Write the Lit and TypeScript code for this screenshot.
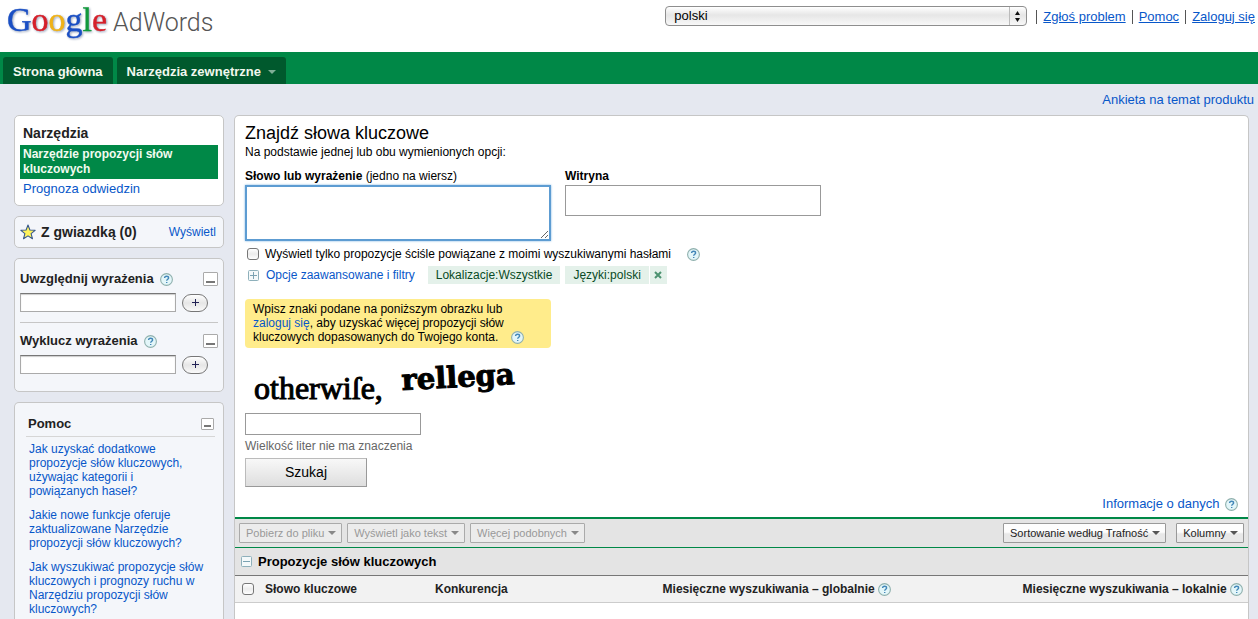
import { LitElement, html, css, svg } from "lit";
import { customElement, property } from "lit/decorators.js";

@customElement("help-icon")
class HelpIcon extends LitElement {
  static styles = css`
    :host { display: inline-flex; width: 13px; height: 13px; vertical-align: -3px; }
    svg { display: block; width: 13px; height: 13px; }
  `;
  render() {
    return html`<svg viewBox="0 0 13 13" role="img" aria-label="Pomoc">
      <circle cx="6.5" cy="6.5" r="5.9" fill="#e3f6f9" stroke="#8fb0ad" stroke-width="1.1" />
      <path d="M4.6 5.1C4.6 3.9 5.4 3.2 6.6 3.2C7.8 3.2 8.6 3.9 8.6 4.9C8.6 6.2 6.7 6.3 6.7 7.8M6.7 8.9V10.1"
        fill="none" stroke="#4387b8" stroke-width="1.4" />
    </svg>`;
  }
}

@customElement("box-toggle")
class BoxToggle extends LitElement {
  @property() kind = "minus";
  @property() label = "";
  static styles = css`
    :host { display: inline-flex; }
    .box { display: flex; padding: 0; border: 0; background: none; }
    svg { display: block; width: 11px; height: 11px; }
  `;
  render() {
    return html`<button class="box" aria-label=${this.label}>
      <svg viewBox="0 0 11 11">
        <rect x=".5" y=".5" width="10" height="10" rx="1" fill="#f4f9fa" stroke="#8eb0bb" />
        <path d=${this.kind === "plus" ? "M2 5.5H9M5.5 2V9" : "M2 5.5H9"} stroke="#7ba2b2" fill="none" />
      </svg>
    </button>`;
  }
}

const caret = svg`<path d="M0 0H8L4 4Z" fill="currentColor" />`;

@customElement("app-root")
class AppRoot extends LitElement {
  static styles = css`
    :host {
      display: flex; flex-direction: column; min-height: 100vh;
      background: #e5e8f0; color: #000;
      font-family: "Liberation Sans", Arial, Helvetica, sans-serif;
      font-size: 12px; line-height: 14px;
    }
    * { box-sizing: border-box; }
    a { color: #0857c9; text-decoration: none; }
    button, input, select, textarea { font-family: inherit; margin: 0; }
    h1, h2, p, ul { margin: 0; padding: 0; }

    .top { display: flex; justify-content: space-between; align-items: flex-start; height: 52px; background: #fff; padding: 0 3px 0 7px; }
    .logo { display: flex; align-items: baseline; height: 44px; line-height: 40px; }
    .google { font-family: "Liberation Serif", serif; font-size: 34px; filter: drop-shadow(1px 1px 1px #99a5bb); -webkit-text-stroke: 0.4px; }
    .blue { color: #1a4fc4; } .red { color: #d6202a; } .yellow { color: #f0b217; } .green { color: #129a3c; }
    .adwords { font-family: Roboto, sans-serif; font-weight: 300; font-size: 25px; color: #555; margin-left: 6px; }
    .account { display: flex; align-items: center; padding-top: 6px; font-size: 13px; line-height: 20px; }
    .account a { text-decoration: underline; padding: 0 6px; border-left: 1px solid #555; line-height: 14px; margin-top: 1px; }
    .account a:last-child { padding-right: 0; }
    .lang { display: grid; width: 362px; margin-right: 9px; }
    .lang select, .lang svg { grid-area: 1 / 1; }
    .lang select {
      appearance: none; height: 20px; border: 1px solid #8e8e8e; border-radius: 4px; padding: 0 20px 1px 8px;
      background: linear-gradient(#fff, #e6e6e6 45%, #f8f8f8); font-size: 13px; color: #000;
    }
    .lang svg { justify-self: end; width: 18px; height: 20px; pointer-events: none; }

    .nav { display: flex; gap: 4px; align-items: flex-end; height: 32px; padding: 0 3px; background: #008847; }
    .tab {
      display: flex; align-items: center; gap: 7px; height: 27px; padding: 2px 10px 0;
      background: #00592d; color: #f2f8ee; font-size: 13px; font-weight: bold; border-radius: 3px 3px 0 0;
    }
    .tab svg { width: 8px; height: 4px; color: #7fae96; }
    .survey { padding: 8px 4px 8px; text-align: right; font-size: 13px; line-height: 15px; }

    .body { flex: 1; display: grid; grid-template-columns: 210px minmax(0, 1fr); gap: 10px; padding: 0 9px 0 14px; }
    .side { display: flex; flex-direction: column; gap: 10px; }
    .card { background: #f4f6fa; border: 1px solid #c6c6c6; border-radius: 5px; }
    .title { font-size: 14px; line-height: 16px; font-weight: bold; color: #222; }
    .tools { background: #fff; padding: 9px 5px 7px; font-size: 13px; line-height: 15px; }
    .tools .title { padding: 0 3px 4px; }
    .tools a { display: block; padding: 2px 3px; }
    .tools .current { background: #008847; color: #f2fbf0; font-size: 12px; font-weight: bold; }
    .starred { display: flex; align-items: center; height: 32px; padding: 0 7px 0 5px; }
    .starred svg { width: 16px; height: 16px; margin-right: 5px; }
    .starred a { margin-left: auto; }
    .filters { padding: 12px 5px 17px; }
    .row { display: flex; align-items: center; gap: 6px; }
    .row .mini { margin-left: auto; }
    .row + .row { margin-top: 6px; }
    .rule { border: 0; border-top: 1px solid #c6c6c6; margin: 10px 0; }
    .filters .title, .help .title { font-size: 13px; }
    .mini { display: flex; align-items: flex-end; justify-content: center; width: 15px; height: 14px; padding: 0 0 2px; border: 1px solid #aaa; background: #fff; border-radius: 1px; }
    .mini i { width: 9px; height: 2px; background: #777; }
    .help .mini { width: 13px; height: 12px; }
    .help .mini i { width: 7px; }
    .term { width: 156px; height: 19px; border: 1px solid #aaa; border-top-color: #777; box-shadow: inset 0 1px 1px #ccc; background: #fff; padding: 0 2px; font-size: 12px; }
    .add { width: 26px; height: 18px; border: 1px solid #777; border-radius: 9px; padding: 0; background: linear-gradient(#fff, #e6e6e6 50%, #fafafa); display: flex; align-items: center; justify-content: center; }
    .add svg { width: 7px; height: 7px; }
    .help { flex: 1; border-bottom: 0; border-radius: 5px 5px 0 0; padding: 13px 8px 0 11px; }
    .help .row { padding: 0 1px 4px 2px; border-bottom: 1px solid #d6d6d6; }
    .help ul { list-style: none; padding: 5px 10px 0 3px; display: grid; gap: 10px; }

    .main { background: #fff; border: 1px solid #c6c6c6; border-bottom: 0; border-radius: 5px 5px 0 0; min-width: 0; }
    .search { padding: 7px 10px 5px; }
    .search h1 { font-size: 18px; line-height: 20px; font-weight: normal; }
    .lead { line-height: 16px; padding-top: 1px; }
    .fields { display: flex; gap: 14px; padding-top: 9px; }
    .field { display: flex; flex-direction: column; gap: 2px; }
    .field label { line-height: 14px; }
    .field textarea { width: 306px; height: 56px; border: 2px solid #5d9cd2; outline: 0; box-shadow: 0 0 2px #79b2e2; padding: 3px; resize: both; font-size: 13px; display: block; }
    .field input { width: 256px; height: 31px; border: 1px solid #999; padding: 0 4px; font-size: 13px; }
    .line { display: flex; align-items: center; }
    .check { appearance: none; width: 12px; height: 12px; border: 1px solid #777; border-radius: 3px; background: linear-gradient(#fff, #ececec 50%, #fff); flex: none; }
    .closely { gap: 6px; padding: 6px 2px 0; height: 20px; }
    .closely help-icon { margin-left: 10px; }
    .options { gap: 7px; padding: 4px 3px 0; height: 24px; }
    .options a { margin-right: 6px; }
    .chips { display: flex; gap: 5px; color: #0a4b25; }
    .chip { display: flex; align-items: center; height: 18px; padding: 0 8px; background: #e4f1ea; }
    .chip + .chip { padding-right: 0; gap: 8px; }
    .close { display: flex; align-items: center; justify-content: center; width: 18px; height: 18px; padding: 0; border: 0; border-left: 1px solid #fff; background: none; }
    .close svg { width: 8px; height: 8px; }
    .notice { width: 306px; margin-top: 14px; padding: 3px 8px 4px; background: #ffec8b; border-radius: 4px; }
    .notice help-icon { margin-left: 9px; }
    .captcha { display: block; width: 300px; height: 60px; margin-top: 2px; }
    .answer { display: block; width: 176px; height: 22px; margin-top: 3px; border: 1px solid #999; padding: 0 4px; font-size: 12px; }
    .hint { color: #666; padding: 4px 0 5px; }
    .hint label { display: block; }
    .go { display: block; width: 122px; height: 29px; border: 1px solid #bbb; border-right-color: #999; border-bottom-color: #999; background: linear-gradient(#f8f8f8, #dedede); padding: 0 0 2px; font-size: 14px; color: #000; }
    .info { text-align: right; font-size: 13px; padding-top: 9px; line-height: 16px; }
    .info help-icon { margin-left: 2px; }

    .bar { display: flex; align-items: center; gap: 5px; height: 31px; padding: 0 4px; background: #e4e4e4; border-top: 2px solid #008847; border-bottom: 1px solid #008847; }
    .drop { display: flex; align-items: center; gap: 4px; height: 20px; padding: 0 5px 0 6px; border: 1px solid #999; border-radius: 1px; background: linear-gradient(#fdfdfd 45%, #e8e8e8 55%); font-size: 11px; color: #222; white-space: nowrap; }
    .drop svg { width: 8px; height: 4px; color: #555; }
    .drop:disabled { color: #999; background: #ececec; border-color: #aaa; }
    .drop:disabled svg { color: #888; }
    .right { display: flex; gap: 10px; margin-left: auto; }
    .group { display: flex; align-items: center; gap: 6px; height: 28px; padding: 0 6px; background: #e4e4e4; border-bottom: 1px solid #777; }
    .group h2 { font-size: 13px; line-height: 16px; }
    table { width: 100%; border-collapse: collapse; table-layout: fixed; }
    th { height: 26px; padding: 0; background: #f2f2f2; border-bottom: 1px solid #ccc; text-align: left; font-size: 12px; color: #222; white-space: nowrap; }
    .c-check { width: 30px; } .c-word { width: 170px; } .c-comp { width: 170px; } .c-global { width: 286px; }
    th .check { display: block; margin-left: 7px; }
    th.num { text-align: right; }
    th.num:last-child { padding-right: 5px; }
  `;

  private filter(id: string, text: string) {
    return html`
      <div class="row">
        <label class="title" for=${id}>${text}</label><help-icon></help-icon>
        <button class="mini" aria-label="Zwiń"><i></i></button>
      </div>
      <div class="row">
        <input class="term" id=${id} />
        <button class="add" aria-label="Dodaj"><svg viewBox="0 0 7 7"><path d="M0 3.5H7M3.5 0V7" stroke="#225" /></svg></button>
      </div>`;
  }

  private drop(text: string, disabled = false) {
    return html`<button class="drop" ?disabled=${disabled}>${text}<svg viewBox="0 0 8 4">${caret}</svg></button>`;
  }

  render() {
    return html`
      <header class="top">
        <div class="logo">
          <span class="google"><span class="blue">G</span><span class="red">o</span><span class="yellow">o</span><span class="blue">g</span><span class="green">l</span><span class="red">e</span></span>
          <span class="adwords">AdWords</span>
        </div>
        <div class="account">
          <div class="lang">
            <select aria-label="Język"><option>polski</option></select>
            <svg viewBox="0 0 18 20"><path d="M.5 1V19" stroke="#bbb" /><path d="M6 9L8.5 5L11 9ZM6 12H11L8.5 16Z" fill="#111" /></svg>
          </div>
          <a href="#">Zgłoś problem</a><a href="#">Pomoc</a><a href="#">Zaloguj się</a>
        </div>
      </header>
      <nav class="nav">
        <a class="tab" href="#">Strona główna</a>
        <a class="tab" href="#">Narzędzia zewnętrzne<svg viewBox="0 0 8 4">${caret}</svg></a>
      </nav>
      <div class="survey"><a href="#">Ankieta na temat produktu</a></div>

      <div class="body">
        <aside class="side">
          <section class="card tools">
            <h2 class="title">Narzędzia</h2>
            <a class="current" href="#">Narzędzie propozycji słów kluczowych</a>
            <a href="#">Prognoza odwiedzin</a>
          </section>
          <section class="card starred">
            <svg viewBox="0 0 15 15"><path d="M7.5 1L9.3 5.6L14.2 5.9L10.4 9L11.7 13.8L7.5 11.1L3.3 13.8L4.6 9L.8 5.9L5.7 5.6Z" fill="#fff35c" stroke="#34568b" stroke-linejoin="round" /></svg>
            <h2 class="title">Z gwiazdką (0)</h2>
            <a href="#">Wyświetl</a>
          </section>
          <section class="card filters">
            ${this.filter("include", "Uwzględnij wyrażenia")}
            <hr class="rule" />
            ${this.filter("exclude", "Wyklucz wyrażenia")}
          </section>
          <section class="card help">
            <div class="row"><h2 class="title">Pomoc</h2><button class="mini" aria-label="Zwiń"><i></i></button></div>
            <ul>
              <li><a href="#">Jak uzyskać dodatkowe propozycje słów kluczowych, używając kategorii i powiązanych haseł?</a></li>
              <li><a href="#">Jakie nowe funkcje oferuje zaktualizowane Narzędzie propozycji słów kluczowych?</a></li>
              <li><a href="#">Jak wyszukiwać propozycje słów kluczowych i prognozy ruchu w Narzędziu propozycji słów kluczowych?</a></li>
            </ul>
          </section>
        </aside>

        <main class="main">
          <div class="search">
            <h1>Znajdź słowa kluczowe</h1>
            <p class="lead">Na podstawie jednej lub obu wymienionych opcji:</p>
            <div class="fields">
              <div class="field"><label for="words"><b>Słowo lub wyrażenie</b> (jedno na wiersz)</label><textarea id="words"></textarea></div>
              <div class="field"><label for="site"><b>Witryna</b></label><input id="site" /></div>
            </div>
            <div class="line closely">
              <input class="check" type="checkbox" id="close" />
              <label for="close">Wyświetl tylko propozycje ściśle powiązane z moimi wyszukiwanymi hasłami</label>
              <help-icon></help-icon>
            </div>
            <div class="line options">
              <box-toggle kind="plus" label="Rozwiń"></box-toggle>
              <a href="#">Opcje zaawansowane i filtry</a>
              <div class="chips">
                <span class="chip">Lokalizacje:Wszystkie</span>
                <span class="chip">Języki:polski<button class="close" aria-label="Usuń"><svg viewBox="0 0 8 8"><path d="M1 1L7 7M7 1L1 7" stroke="#4c9270" stroke-width="2" /></svg></button></span>
              </div>
            </div>
            <p class="notice">Wpisz znaki podane na poniższym obrazku lub <a href="#">zaloguj się</a>, aby uzyskać więcej propozycji słów kluczowych dopasowanych do Twojego konta. <help-icon></help-icon></p>
            <svg class="captcha" viewBox="0 0 300 60" fill="#000" stroke="#000">
              <text x="9" y="49" font-family="Liberation Serif, serif" font-size="32" stroke-width="1">otherwiſe,</text>
              <text x="157" y="40" font-family="DejaVu Serif, serif" font-size="29" font-weight="bold" stroke-width="1" transform="rotate(-3 157 40)">rellega</text>
            </svg>
            <input class="answer" id="answer" />
            <p class="hint"><label for="answer">Wielkość liter nie ma znaczenia</label></p>
            <button class="go">Szukaj</button>
            <p class="info"><a href="#">Informacje o danych</a> <help-icon></help-icon></p>
          </div>
          <div class="bar">
            ${this.drop("Pobierz do pliku", true)}${this.drop("Wyświetl jako tekst", true)}${this.drop("Więcej podobnych", true)}
            <div class="right">${this.drop("Sortowanie według Trafność")}${this.drop("Kolumny")}</div>
          </div>
          <div class="group"><box-toggle label="Zwiń"></box-toggle><h2>Propozycje słów kluczowych</h2></div>
          <table>
            <thead>
              <tr>
                <th class="c-check"><input class="check" type="checkbox" aria-label="Zaznacz wszystko" /></th>
                <th class="c-word">Słowo kluczowe</th>
                <th class="c-comp">Konkurencja</th>
                <th class="c-global num">Miesięczne wyszukiwania – globalnie <help-icon></help-icon></th>
                <th class="num">Miesięczne wyszukiwania – lokalnie <help-icon></help-icon></th>
              </tr>
            </thead>
          </table>
        </main>
      </div>
    `;
  }
}
